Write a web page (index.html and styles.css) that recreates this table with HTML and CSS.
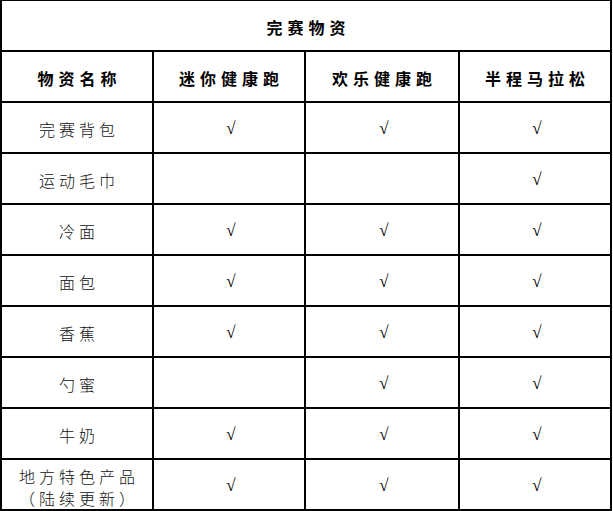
FILE: index.html
```html
<!DOCTYPE html>
<html lang="zh-CN">
<head>
<meta charset="utf-8">
<title>完赛物资</title>
<link rel="stylesheet" href="styles.css">
</head>
<body>
<table class="kit">
  <colgroup>
    <col class="c1"><col class="c2"><col class="c3"><col class="c4">
  </colgroup>
  <thead>
    <tr><th colspan="4" class="title">完赛物资</th></tr>
    <tr>
      <th>物资名称</th>
      <th>迷你健康跑</th>
      <th>欢乐健康跑</th>
      <th>半程马拉松</th>
    </tr>
  </thead>
  <tbody>
    <tr><td>完赛背包</td><td class="ck">√</td><td class="ck">√</td><td class="ck">√</td></tr>
    <tr><td>运动毛巾</td><td class="ck"></td><td class="ck"></td><td class="ck">√</td></tr>
    <tr><td>冷面</td><td class="ck">√</td><td class="ck">√</td><td class="ck">√</td></tr>
    <tr><td>面包</td><td class="ck">√</td><td class="ck">√</td><td class="ck">√</td></tr>
    <tr><td>香蕉</td><td class="ck">√</td><td class="ck">√</td><td class="ck">√</td></tr>
    <tr><td>勺蜜</td><td class="ck"></td><td class="ck">√</td><td class="ck">√</td></tr>
    <tr><td>牛奶</td><td class="ck">√</td><td class="ck">√</td><td class="ck">√</td></tr>
    <tr><td class="two"><span class="ln">地方特色产品</span><span class="ln">（陆续更新）</span></td><td class="ck">√</td><td class="ck">√</td><td class="ck">√</td></tr>
  </tbody>
</table>
</body>
</html>
```
FILE: styles.css
```css
html, body {
  margin: 0;
  padding: 0;
  background: #fff;
}

.kit {
  margin-top: -1px;
  width: 612px;
  table-layout: fixed;
  border-collapse: collapse;
  border: 2px solid #000;
  font-family: "Noto Sans CJK SC", "Noto Sans", sans-serif;
  color: #111;
}

.c1 { width: 152px; }
.c2 { width: 152px; }
.c3 { width: 154px; }
.c4 { width: 152px; }

.kit tr {
  height: 51px;
}

.kit th,
.kit td {
  border: 2px solid #000;
  padding: 3px 0 0 4px;
  text-align: center;
  vertical-align: middle;
  font-size: 16px;
  line-height: 22px;
}

.kit th {
  font-weight: 700;
  letter-spacing: 5px;
  padding-left: 5px;
  color: #000;
}

.kit td {
  font-weight: 300;
  letter-spacing: 4px;
}

.kit td.ck {
  font-family: "Liberation Serif", serif;
  font-weight: 400;
  letter-spacing: 0;
  padding-left: 4px;
  font-size: 17px;
  color: #000;
}

.kit td.two {
  padding-top: 4px;
}

.kit td.two .ln {
  display: block;
  height: 22px;
  line-height: 22px;
}
```
